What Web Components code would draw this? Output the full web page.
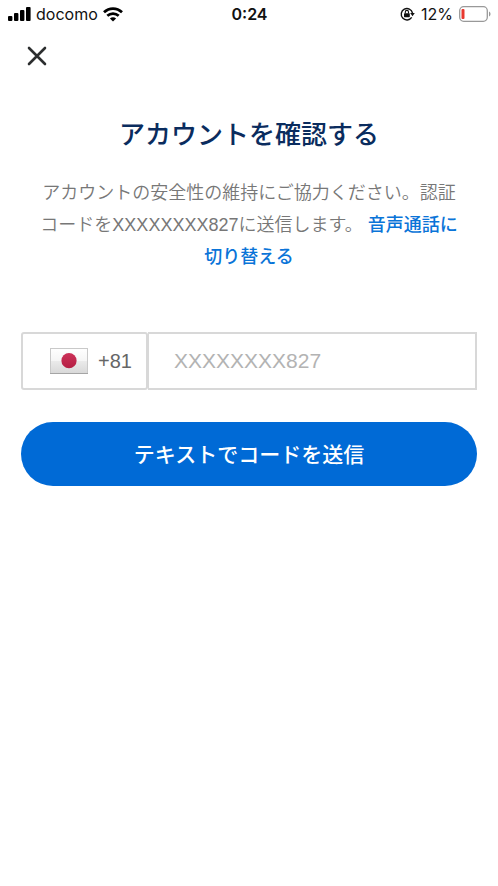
<!DOCTYPE html>
<html lang="ja">
<head>
<meta charset="utf-8">
<meta name="viewport" content="width=device-width, initial-scale=1">
<title>アカウントを確認する</title>
<style>
html, body { margin: 0; background: #fff; }
body { font-family: "Liberation Sans", "Noto Sans CJK JP", sans-serif; min-height: 100vh; }
</style>
</head>
<body>
<verify-screen></verify-screen>
<script>
const define = (name, html) => {
  const template = document.createElement('template');
  template.innerHTML = html;
  customElements.define(name, class extends HTMLElement {
    constructor() {
      super();
      this.attachShadow({ mode: 'open' }).append(template.content.cloneNode(true));
    }
  });
};

define('status-bar', `
<style>
:host { display: grid; grid-template-columns: 1fr auto 1fr; align-items: center; height: 28px; padding: 0 7px 0 8px; font: 16px/28px Inter, sans-serif; color: #111; }
div { display: flex; align-items: center; gap: 5px; }
.right { justify-content: flex-end; gap: 6px; }
b { font-weight: 600; }
svg { display: block; flex: none; }
</style>
<div>
  <svg width="23" height="14" viewBox="0 0 23 14" fill="#000"><rect y="9" width="4.4" height="5" rx="1"/><rect x="6" y="6" width="4.4" height="8" rx="1"/><rect x="12" y="3" width="4.4" height="11" rx="1"/><rect x="18" width="4.6" height="14" rx="1"/></svg>
  <span>docomo</span>
  <svg width="20" height="15" viewBox="0 0 20 15" fill="none" stroke="#000" stroke-width="2.7"><path d="M1 5.3C6.2.3 13.8.3 19 5.3"/><path d="M4.3 8.8c3.3-3 8.1-3 11.4 0"/><path d="M6.9 11.4c1.8-1.5 4.4-1.5 6.2 0L10 14.6z" fill="#000" stroke="none"/></svg>
</div>
<b>0:24</b>
<div class="right">
  <svg width="15" height="14" viewBox="0 0 15 14"><path d="M11.7 10.4A5.7 5.7 0 1 1 12.5 6" fill="none" stroke="#111" stroke-width="1.4"/><path d="M10.2 6h4.6l-2.3 3.2z" fill="#111"/><rect x="4" y="6.3" width="5.8" height="4" rx=".7" fill="#111"/><path d="M5.3 6.5V5a1.6 1.6 0 0 1 3.2 0v1.5" fill="none" stroke="#111" stroke-width="1.1"/></svg>
  <span>12%</span>
  <svg width="32" height="16" viewBox="0 0 32 16"><rect x=".7" y=".7" width="27.6" height="14.6" rx="4" fill="none" stroke="#999" stroke-width="1.3"/><rect x="2.5" y="3" width="3" height="10" rx="1" fill="#e8382f"/><path d="M30 5.5c2 .8 2 4.2 0 5z" fill="#999"/></svg>
</div>`);

define('close-button', `
<style>
:host { display: block; }
button { display: grid; place-items: center; width: 32px; height: 32px; padding: 0; border: 0; background: none; cursor: pointer; }
</style>
<button type="button" aria-label="閉じる"><svg width="20" height="20" viewBox="0 0 20 20" fill="none" stroke="#2c2e2f" stroke-width="2.6" stroke-linecap="round"><path d="M2 2l16 16M18 2L2 18"/></svg></button>`);

define('page-intro', `
<style>
:host { display: block; padding: 0 13px; text-align: center; }
h1 { margin: 0 0 24px; font-size: 26px; line-height: 36px; font-weight: 500; color: #0a2c5e; }
p { margin: 0; font-size: 18px; line-height: 32px; font-weight: 350; color: #777; }
::slotted(a) { color: #0a74d8; font-weight: 500; text-decoration: none; }
</style>
<h1><slot name="title"></slot></h1>
<p><slot></slot></p>`);

define('japan-flag', `
<style>:host { display: block; } svg { display: block; }</style>
<svg width="38" height="26" viewBox="0 0 38 26" role="img" aria-label="日本"><defs><linearGradient id="f" x2="0" y2="1"><stop stop-color="#fff"/><stop offset=".5" stop-color="#f5f5f5"/><stop offset=".5" stop-color="#ebebeb"/><stop offset="1" stop-color="#d8d8d8"/></linearGradient><linearGradient id="d" x2="0" y2="1"><stop stop-color="#cc3158"/><stop offset="1" stop-color="#b51f43"/></linearGradient></defs><rect x=".5" y=".5" width="37" height="25" fill="url(#f)" stroke="#c9c9c9"/><path d="M0 25.5h38" stroke="#a5a5a5"/><circle cx="19" cy="12.7" r="7.6" fill="url(#d)"/></svg>`);

define('phone-field', `
<style>
:host { display: flex; height: 58px; }
button, input { box-sizing: border-box; height: 100%; margin: 0; background: #fff; border: 2px solid #d8d8d8; font-family: inherit; }
button { display: flex; align-items: center; justify-content: flex-end; gap: 10px; flex: none; width: 127px; padding: 0 14px 0 0; border-radius: 3px; font-size: 20px; color: #666; }
input { flex: 1; min-width: 0; padding: 0 25px; border-left-width: 1px; border-radius: 0; font-size: 21px; color: #444; }
input::placeholder { color: #b3b3b3; opacity: 1; }
</style>
<button type="button" aria-label="国番号 +81"><japan-flag></japan-flag><span>+81</span></button>
<input type="tel" aria-label="電話番号" placeholder="XXXXXXXX827">`);

define('primary-button', `
<style>
:host { display: block; }
button { display: block; width: 100%; height: 64px; padding: 0 0 2px; border: 0; border-radius: 32px; background: #006ad6; color: #fff; font: 500 21px/32px "Noto Sans CJK JP", sans-serif; cursor: pointer; }
</style>
<button type="submit"><slot></slot></button>`);

define('verify-screen', `
<style>
:host { display: block; }
main { padding: 12px 21px 24px; }
page-intro { margin-top: 45px; }
form { display: grid; gap: 32px; margin: 59px 0 0; }
</style>
<status-bar></status-bar>
<main>
<close-button></close-button>
<page-intro><span slot="title">アカウントを確認する</span>アカウントの安全性の維持にご協力ください。認証コードをXXXXXXXX827に送信します。 <a href="#voice">音声通話に切り替える</a></page-intro>
<form><phone-field></phone-field><primary-button>テキストでコードを送信</primary-button></form>
</main>`);
</script>
</body>
</html>
